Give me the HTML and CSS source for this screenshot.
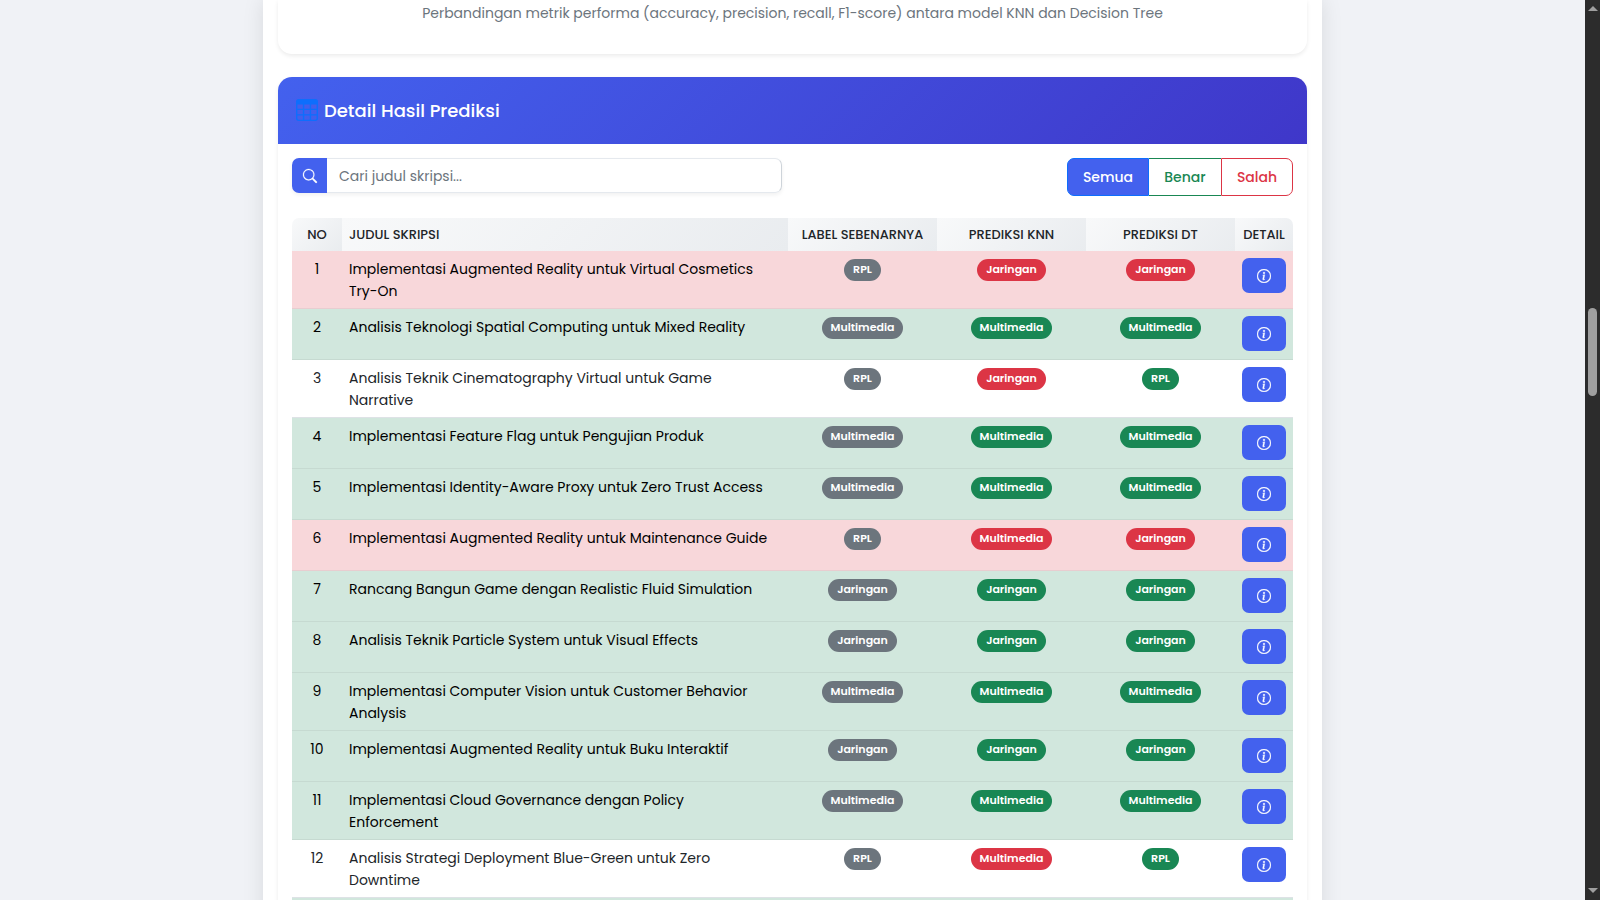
FILE: index.html
```html
<!DOCTYPE html>
<html lang="id">
<head>
<meta charset="utf-8">
<title>Detail Hasil Prediksi</title>
<link rel="stylesheet" href="styles.css">
</head>
<body>
<svg class="sprite" aria-hidden="true">
  <symbol id="info" viewBox="0 0 16 16"><path d="M8 15A7 7 0 1 1 8 1a7 7 0 0 1 0 14m0 1A8 8 0 1 0 8 0a8 8 0 0 0 0 16"/><path d="m8.930 6.588-2.290.287-.082.380.450.083c.294.070.352.176.288.469l-.738 3.468c-.194.897.105 1.319.808 1.319.545 0 1.178-.252 1.465-.598l.088-.416c-.200.176-.492.246-.686.246-.275 0-.375-.193-.304-.533zM9 4.500a1 1 0 1 1-2 0 1 1 0 0 1 2 0"/></symbol>
</svg>
<main class="page">
  <div class="container">
    <section class="card chart-card">
      <p class="caption">Perbandingan metrik performa (accuracy, precision, recall, F1-score) antara model KNN dan Decision Tree</p>
    </section>
    <section class="card">
      <header class="card-header">
        <svg class="table-icon" viewBox="0 0 16 16" aria-hidden="true"><path d="M0 2a2 2 0 0 1 2-2h12a2 2 0 0 1 2 2v12a2 2 0 0 1-2 2H2a2 2 0 0 1-2-2zm15 2h-4v3h4zm0 4h-4v3h4zm0 4h-4v3h3a1 1 0 0 0 1-1zm-5 3v-3H6v3zm-5 0v-3H1v2a1 1 0 0 0 1 1zm-4-4h4V8H1zm0-4h4V4H1zm5-3v3h4V4zm4 4H6v3h4z"/></svg>
        <h2>Detail Hasil Prediksi</h2>
      </header>
      <div class="card-body">
        <div class="toolbar">
          <div class="search">
            <label class="search-label" for="q" aria-label="Cari"><svg viewBox="0 0 16 16"><path d="M11.742 10.344a6.500 6.500 0 1 0-1.397 1.398h-.001q.044.060.098.115l3.850 3.850a1 1 0 0 0 1.415-1.414l-3.850-3.850a1 1 0 0 0-.115-.100zM12 6.500a5.500 5.500 0 1 1-11 0 5.500 5.500 0 0 1 11 0"/></svg></label>
            <input id="q" type="text" placeholder="Cari judul skripsi...">
          </div>
          <div class="filters">
            <button class="filter all">Semua</button>
            <button class="filter right">Benar</button>
            <button class="filter wrong">Salah</button>
          </div>
        </div>
        <table class="results">
          <colgroup><col class="c-no"><col><col class="c-label"><col class="c-label"><col class="c-label"><col class="c-detail"></colgroup>
          <thead><tr><th>No</th><th class="title">Judul Skripsi</th><th>Label Sebenarnya</th><th>Prediksi KNN</th><th>Prediksi DT</th><th>Detail</th></tr></thead>
          <tbody id="rows"></tbody>
        </table>
      </div>
    </section>
  </div>
</main>
<div class="scrollbar" aria-hidden="true"><i class="arrow up"></i><i class="thumb"></i><i class="arrow down"></i></div>
<script src="rows.js"></script>
</body>
</html>
```
FILE: styles.css
```css
* { box-sizing: border-box; }
html, body { height: 100%; }
body {
  margin: 0;
  overflow: hidden;
  display: flex;
  background: #f0f2f6;
  color: #212529;
  font-family: Poppins, Inter, "Open Sans", sans-serif;
  font-size: 14px;
  line-height: 22px;
}
.sprite { position: absolute; width: 0; height: 0; }
.page { flex: 1; height: 100vh; overflow: hidden; padding: 0 16px; }
.container {
  max-width: 1059px;
  min-height: 100%;
  margin: 0 auto;
  padding: 0 15px;
  background: #fff;
  box-shadow: 0 0 20px rgba(0, 0, 0, .1);
}
.card {
  background: #fff;
  border-radius: 14px;
  box-shadow: 0 2px 4px rgba(0, 0, 0, .08);
  margin-bottom: 23px;
}
.chart-card { border-radius: 0 0 14px 14px; padding: 2px 14px 30px; text-align: center; }
.caption { margin: 0; color: #6c757d; font-size: 14px; }
.card-header {
  display: flex;
  align-items: center;
  gap: 6px;
  height: 67px;
  padding: 0 18px;
  border-radius: 14px 14px 0 0;
  background: linear-gradient(135deg, #4361ee, #3f37c9);
}
.card-header h2 { margin: 0; color: #fff; font-size: 18px; font-weight: 500; line-height: 24px; }
.table-icon { width: 22px; height: 22px; margin-bottom: 2px; fill: #0d6efd; }
.card-body { padding: 14px; }
.toolbar { display: flex; justify-content: space-between; align-items: flex-start; margin-bottom: 22px; }
.search { display: flex; width: 49%; height: 35px; border-radius: 7px; box-shadow: 0 2px 4px rgba(0, 0, 0, .06); }
.search-label {
  display: flex;
  align-items: center;
  justify-content: center;
  width: 35px;
  border-radius: 7px 0 0 7px;
  background: #4361ee;
}
.search-label svg { width: 14px; height: 14px; fill: #fff; stroke: #fff; stroke-width: .3; overflow: visible; }
.search input {
  flex: 1;
  min-width: 0;
  padding: 0 12px;
  border: 1px solid #e5e9ee;
  border-right-color: #ced4da;
  border-left: 0;
  border-radius: 0 7px 7px 0;
  background: #fff;
  font: inherit;
  outline: 0;
}
.search input::placeholder { color: #6c757d; opacity: 1; }
.filters { display: flex; }
.filter {
  height: 38px;
  padding: 0 14px;
  border: 1px solid;
  background: #fff;
  font: inherit;
  font-weight: 500;
}
.filter.all { width: 82px; border-color: #0d6efd; border-radius: 7px 0 0 7px; background: #4361ee; color: #fff; }
.filter.right { width: 72px; border-color: #198754; border-width: 1px 0; color: #198754; }
.filter.wrong { width: 72px; border-color: #dc3545; border-radius: 0 7px 7px 0; color: #dc3545; }
.results {
  width: 100%;
  table-layout: fixed;
  border-collapse: separate;
  border-spacing: 0;
}
.c-no { width: 50px; }
.c-label { width: 149px; }
.c-detail { width: 58px; }
.results th {
  height: 33px;
  padding: 0;
  background: linear-gradient(135deg, #f8f9fa, #e9ecef);
  font-size: 13px;
  font-weight: 500;
  line-height: 18px;
  text-transform: uppercase;
  white-space: nowrap;
}
.results th:first-child { border-top-left-radius: 7px; }
.results th:last-child { border-top-right-radius: 7px; }
.results td {
  padding: 7px 7px 6px;
  border-bottom: 1px solid #dee2e6;
  text-align: center;
  vertical-align: top;
}
.results .title { padding-left: 7px; padding-right: 7px; text-align: left; }
.results .ok td { background: #d1e7dd; border-color: #c6dad1; color: #000; }
.results .bad td { background: #f8d7da; border-color: #e8cdd0; color: #000; }
.badge {
  display: inline-block;
  height: 22px;
  margin-top: 1px;
  padding: 0 9px;
  border-radius: 11px;
  color: #fff;
  font-size: 11px;
  font-weight: 600;
  line-height: 21px;
  vertical-align: top;
}
.gray { background: #6c757d; }
.green { background: #198754; }
.red { background: #dc3545; }
.detail {
  display: flex;
  align-items: center;
  justify-content: center;
  width: 100%;
  height: 35px;
  margin: 0 0 2px;
  padding: 0;
  border: 0;
  border-radius: 7px;
  background: #4361ee;
}
.detail svg { width: 14px; height: 14px; fill: #fff; stroke: #fff; stroke-width: .4; overflow: visible; }
.scrollbar {
  display: flex;
  flex-direction: column;
  align-items: center;
  width: 15px;
  padding: 6px 0 7px;
  background: #2c2c2c;
}
.thumb { width: 9px; height: 88px; margin-top: 297px; border-radius: 5px; background: #9f9f9f; }
.arrow { border: solid transparent; border-width: 0 5px; }
.up { border-bottom: 5px solid #9f9f9f; }
.down { margin-top: auto; border-top: 5px solid #9f9f9f; }
```
FILE: rows.js
```js
const rows = [
  ["Implementasi Augmented Reality untuk Virtual Cosmetics Try-On", "RPL", "Jaringan", "Jaringan"],
  ["Analisis Teknologi Spatial Computing untuk Mixed Reality", "Multimedia", "Multimedia", "Multimedia"],
  ["Analisis Teknik Cinematography Virtual untuk Game<br>Narrative", "RPL", "Jaringan", "RPL"],
  ["Implementasi Feature Flag untuk Pengujian Produk", "Multimedia", "Multimedia", "Multimedia"],
  ["Implementasi Identity-Aware Proxy untuk Zero Trust Access", "Multimedia", "Multimedia", "Multimedia"],
  ["Implementasi Augmented Reality untuk Maintenance Guide", "RPL", "Multimedia", "Jaringan"],
  ["Rancang Bangun Game dengan Realistic Fluid Simulation", "Jaringan", "Jaringan", "Jaringan"],
  ["Analisis Teknik Particle System untuk Visual Effects", "Jaringan", "Jaringan", "Jaringan"],
  ["Implementasi Computer Vision untuk Customer Behavior<br>Analysis", "Multimedia", "Multimedia", "Multimedia"],
  ["Implementasi Augmented Reality untuk Buku Interaktif", "Jaringan", "Jaringan", "Jaringan"],
  ["Implementasi Cloud Governance dengan Policy<br>Enforcement", "Multimedia", "Multimedia", "Multimedia"],
  ["Analisis Strategi Deployment Blue-Green untuk Zero<br>Downtime", "RPL", "Multimedia", "RPL"]
];
const badge = (text, color) => `<span class="badge ${color}">${text}</span>`;
const body = rows.map(([title, label, knn, dt], i) => {
  const hits = (knn === label) + (dt === label);
  const state = ["bad", "", "ok"][hits];
  const mark = p => badge(p, p === label ? "green" : "red");
  return `<tr class="${state}"><td>${i + 1}</td><td class="title">${title}</td><td>${badge(label, "gray")}</td><td>${mark(knn)}</td><td>${mark(dt)}</td><td><button class="detail" aria-label="Detail ${i + 1}"><svg><use href="#info"/></svg></button></td></tr>`;
}).join("");
document.getElementById("rows").innerHTML = body + '<tr class="ok"><td colspan="6"></td></tr>';
```
